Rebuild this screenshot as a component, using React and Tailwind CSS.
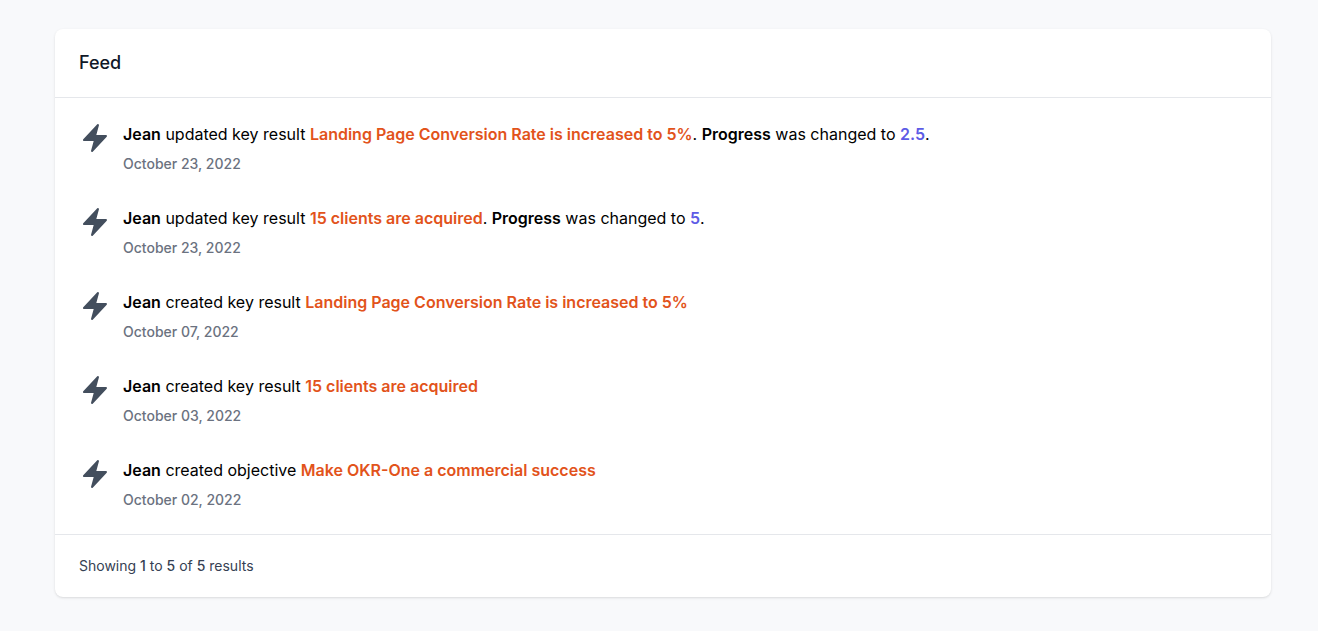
const KR1 = 'Landing Page Conversion Rate is increased to 5%';
const KR2 = '15 clients are acquired';

const events = [
  { id: 1, action: 'updated key result', target: KR1, progress: '2.5', date: 'October 23, 2022' },
  { id: 2, action: 'updated key result', target: KR2, progress: '5', date: 'October 23, 2022' },
  { id: 3, action: 'created key result', target: KR1, date: 'October 07, 2022' },
  { id: 4, action: 'created key result', target: KR2, date: 'October 03, 2022' },
  { id: 5, action: 'created objective', target: 'Make OKR-One a commercial success', date: 'October 02, 2022' },
];

function Bolt() {
  return (
    <svg viewBox="0 0 24 24" fill="currentColor" aria-hidden="true" className="size-8 shrink-0 text-[#434e5d]">
      <path
        fillRule="evenodd"
        clipRule="evenodd"
        d="M14.615 1.595a.75.75 0 01.359.852L12.982 9.75h7.268a.75.75 0 01.548 1.262l-10.5 11.25a.75.75 0 01-1.272-.71l1.992-7.302H3.75a.75.75 0 01-.548-1.262l10.5-11.25a.75.75 0 01.913-.143z"
      />
    </svg>
  );
}

function FeedItem({ event }) {
  return (
    <li className="flex gap-3">
      <Bolt />
      <div>
        <p className="text-base text-black">
          <span className="font-semibold">Jean</span> {event.action}{' '}
          <a href="#" className="font-semibold text-[#e2531b]">{event.target}</a>
          {event.progress && (
            <>
              . <span className="font-semibold">Progress</span> was changed to{' '}
              <span className="font-semibold text-[#5d5be6]">{event.progress}</span>.
            </>
          )}
        </p>
        <p className="mt-2 text-sm font-medium text-[#6b7280]">{event.date}</p>
      </div>
    </li>
  );
}

export default function App() {
  return (
    <div className="min-h-screen bg-[#f8f9fb] pt-[29px] pr-[47px] pb-8 pl-[55px] font-['Inter',sans-serif]">
      <main className="overflow-hidden rounded-lg bg-white shadow">
        <header className="border-b border-gray-200 px-6 py-5">
          <h1 className="text-lg font-medium text-gray-900">Feed</h1>
        </header>
        <ul className="flex flex-col gap-8 p-6">
          {events.map((event) => (
            <FeedItem key={event.id} event={event} />
          ))}
        </ul>
        <footer className="border-t border-gray-200 px-6 py-[21px]">
          <p className="text-sm text-gray-700">
            Showing <span className="font-medium">1</span> to <span className="font-medium">5</span> of{' '}
            <span className="font-medium">5</span> results
          </p>
        </footer>
      </main>
    </div>
  );
}
